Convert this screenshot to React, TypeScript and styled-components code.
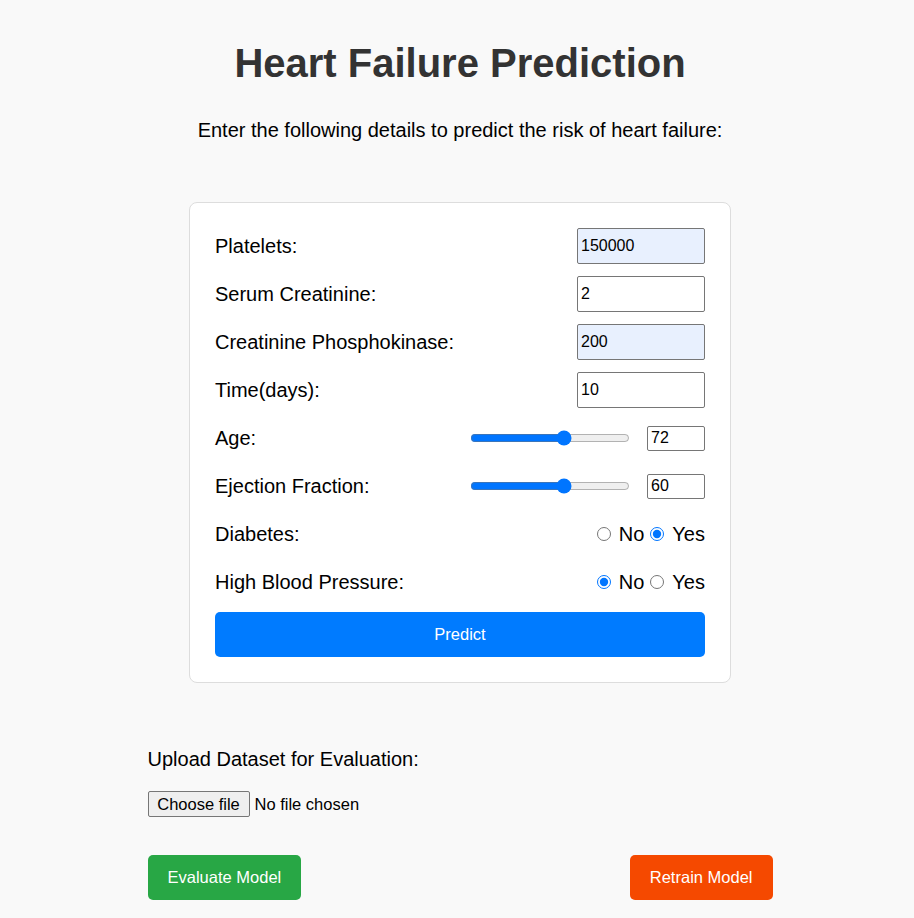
import React, { useState } from "react";
import styled, { createGlobalStyle } from "styled-components";

const Global = createGlobalStyle`
  html, body { margin: 0; padding: 0; background: #f9f9f9; }
  body { font-family: "Liberation Sans", Arial, sans-serif; }
  * { box-sizing: border-box; }
`;

const Page = styled.div`
  padding: 0 0 18px 6px;
  display: flex;
  flex-direction: column;
  align-items: center;
`;

const Title = styled.h1`
  margin: 40px 0 0;
  font-size: 40px;
  line-height: 46px;
  font-weight: 700;
  color: #333;
  text-align: center;
`;

const Subtitle = styled.p`
  margin: 33px 0 0;
  font-size: 20px;
  line-height: 23px;
  color: #000;
  text-align: center;
`;

const Card = styled.div`
  margin-top: 60px;
  width: 542px;
  background: #fff;
  border: 1px solid #ddd;
  border-radius: 8px;
  padding: 25px;
  display: flex;
  flex-direction: column;
  gap: 12px;
`;

const Row = styled.div`
  height: 36px;
  display: flex;
  align-items: center;
  justify-content: space-between;
`;

const Label = styled.label`
  font-size: 20px;
  line-height: 22px;
  color: #000;
`;

const TextInput = styled.input<{ $filled?: boolean }>`
  width: 128px;
  height: 36px;
  padding: 0 3px;
  border: 1px solid #767676;
  border-radius: 2px;
  font-family: "Liberation Sans", Arial, sans-serif;
  font-size: 16px;
  color: #000;
  background: ${(p) => (p.$filled ? "#e8f0fe" : "#fff")};
`;

const SliderGroup = styled.div`
  display: flex;
  align-items: center;
  gap: 17px;
`;

const Slider = styled.input`
  width: 160px;
  margin: 0;
`;

const NumberInput = styled.input`
  width: 58px;
  height: 25px;
  padding: 0 3px;
  border: 1px solid #767676;
  border-radius: 2px;
  font-family: "Liberation Sans", Arial, sans-serif;
  font-size: 16px;
  color: #000;
  background: #fff;
`;

const RadioGroup = styled.div`
  display: flex;
  align-items: center;
  font-size: 20px;
  line-height: 22px;
  color: #000;
`;

const Radio = styled.input`
  width: 14px;
  height: 14px;
  margin: 0 8px 0 6px;
`;

const PredictButton = styled.button`
  height: 45px;
  width: 100%;
  border: none;
  border-radius: 5px;
  background: #007bff;
  color: #fff;
  font-family: "Liberation Sans", Arial, sans-serif;
  font-size: 16.5px;
`;

const Upload = styled.div`
  width: 625px;
  margin-top: 65px;
  display: flex;
  flex-direction: column;
  align-items: flex-start;
`;

const UploadLabel = styled.label`
  font-size: 20px;
  line-height: 23px;
  color: #000;
`;

const FilePicker = styled.label`
  margin-top: 20px;
  display: flex;
  align-items: center;
  gap: 5px;
  font-size: 16.5px;
  color: #000;
`;

const HiddenFile = styled.input`
  display: none;
`;

const FileButton = styled.span`
  height: 26px;
  width: 102px;
  display: flex;
  align-items: center;
  justify-content: center;
  background: #efefef;
  border: 1px solid #767676;
  border-radius: 2px;
  font-size: 16.5px;
  color: #000;
`;

const Actions = styled.div`
  width: 625px;
  margin-top: 38px;
  display: flex;
  justify-content: space-between;
`;

const ActionButton = styled.button<{ $color: string }>`
  height: 45px;
  padding: 0 20px;
  border: none;
  border-radius: 5px;
  background: ${(p) => p.$color};
  color: #fff;
  font-family: "Liberation Sans", Arial, sans-serif;
  font-size: 16.5px;
`;

export default function App() {
  const [age, setAge] = useState(72);
  const [ef, setEf] = useState(60);
  const [diabetes, setDiabetes] = useState("yes");
  const [bp, setBp] = useState("no");
  const [fileName, setFileName] = useState("");

  return (
    <>
      <Global />
      <Page>
        <Title>Heart Failure Prediction</Title>
        <Subtitle>Enter the following details to predict the risk of heart failure:</Subtitle>
        <Card>
          <Row>
            <Label>Platelets:</Label>
            <TextInput $filled defaultValue="150000" />
          </Row>
          <Row>
            <Label>Serum Creatinine:</Label>
            <TextInput defaultValue="2" />
          </Row>
          <Row>
            <Label>Creatinine Phosphokinase:</Label>
            <TextInput $filled defaultValue="200" />
          </Row>
          <Row>
            <Label>Time(days):</Label>
            <TextInput defaultValue="10" />
          </Row>
          <Row>
            <Label>Age:</Label>
            <SliderGroup>
              <Slider type="range" min={1} max={120} value={age} onChange={(e) => setAge(Number(e.target.value))} />
              <NumberInput type="number" value={age} onChange={(e) => setAge(Number(e.target.value))} />
            </SliderGroup>
          </Row>
          <Row>
            <Label>Ejection Fraction:</Label>
            <SliderGroup>
              <Slider type="range" min={1} max={100} value={ef} onChange={(e) => setEf(Number(e.target.value))} />
              <NumberInput type="number" value={ef} onChange={(e) => setEf(Number(e.target.value))} />
            </SliderGroup>
          </Row>
          <Row>
            <Label>Diabetes:</Label>
            <RadioGroup>
              <Radio type="radio" name="diabetes" checked={diabetes === "no"} onChange={() => setDiabetes("no")} />
              <span>No</span>
              <Radio type="radio" name="diabetes" checked={diabetes === "yes"} onChange={() => setDiabetes("yes")} />
              <span>Yes</span>
            </RadioGroup>
          </Row>
          <Row>
            <Label>High Blood Pressure:</Label>
            <RadioGroup>
              <Radio type="radio" name="bp" checked={bp === "no"} onChange={() => setBp("no")} />
              <span>No</span>
              <Radio type="radio" name="bp" checked={bp === "yes"} onChange={() => setBp("yes")} />
              <span>Yes</span>
            </RadioGroup>
          </Row>
          <PredictButton>Predict</PredictButton>
        </Card>
        <Upload>
          <UploadLabel>Upload Dataset for Evaluation:</UploadLabel>
          <FilePicker>
            <HiddenFile
              type="file"
              onChange={(e) => setFileName(e.target.files && e.target.files[0] ? e.target.files[0].name : "")}
            />
            <FileButton>Choose file</FileButton>
            <span>{fileName || "No file chosen"}</span>
          </FilePicker>
        </Upload>
        <Actions>
          <ActionButton $color="#28a745">Evaluate Model</ActionButton>
          <ActionButton $color="#f54900">Retrain Model</ActionButton>
        </Actions>
      </Page>
    </>
  );
}
